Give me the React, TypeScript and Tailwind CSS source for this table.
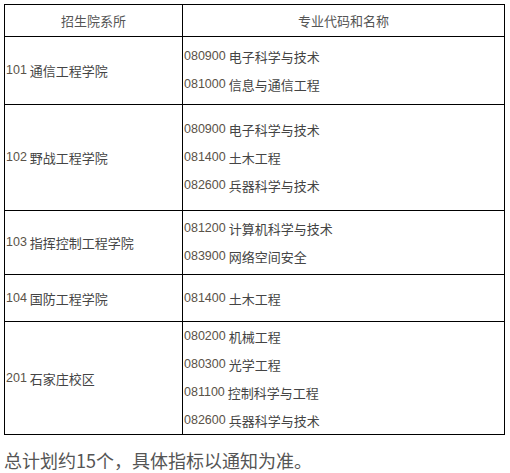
const ROWS = [
  { dept: "101 通信工程学院", h: 68, majors: ["080900 电子科学与技术", "081000 信息与通信工程"] },
  {
    dept: "102 野战工程学院",
    h: 106,
    majors: ["080900 电子科学与技术", "081400 土木工程", "082600 兵器科学与技术"],
  },
  { dept: "103 指挥控制工程学院", h: 64, majors: ["081200 计算机科学与技术", "083900 网络空间安全"] },
  { dept: "104 国防工程学院", h: 47, majors: ["081400 土木工程"] },
  {
    dept: "201 石家庄校区",
    h: 112,
    majors: ["080200 机械工程", "080300 光学工程", "081100 控制科学与工程", "082600 兵器科学与技术"],
  },
];

function Code({ text }: { text: string }) {
  const [num, ...rest] = text.split(" ");
  return (
    <div className="flex items-center h-[28px] gap-[3px] leading-none">
      <span className="font-['Liberation_Sans'] text-[12.5px] text-[#5a5248]">{num}</span>
      <span>{rest.join(" ")}</span>
    </div>
  );
}

export default function App() {
  return (
    <div className="bg-white w-[510px] min-h-[473px] pt-1 pl-1 font-['Noto_Sans_CJK_SC','Liberation_Sans',sans-serif] text-[13px] text-[#444]">
      <table className="border-collapse w-[501px] table-fixed">
        <colgroup>
          <col className="w-[178px]" />
          <col />
        </colgroup>
        <thead>
          <tr className="h-[32px]">
            <th className="border border-black p-0 font-normal text-[#555] text-center">招生院系所</th>
            <th className="border border-black p-0 font-normal text-[#555] text-center">专业代码和名称</th>
          </tr>
        </thead>
        <tbody>
          {ROWS.map((r) => (
            <tr key={r.dept} style={{ height: r.h }}>
              <td className="border border-black px-[1px] py-0 align-middle">
                <Code text={r.dept} />
              </td>
              <td className="border border-black px-[1px] py-0 align-middle">
                {r.majors.map((m) => (
                  <Code key={m} text={m} />
                ))}
              </td>
            </tr>
          ))}
        </tbody>
      </table>
      <p className="mt-[15px] text-[18px] leading-[20px] text-[#555]">总计划约15个，具体指标以通知为准。</p>
    </div>
  );
}
